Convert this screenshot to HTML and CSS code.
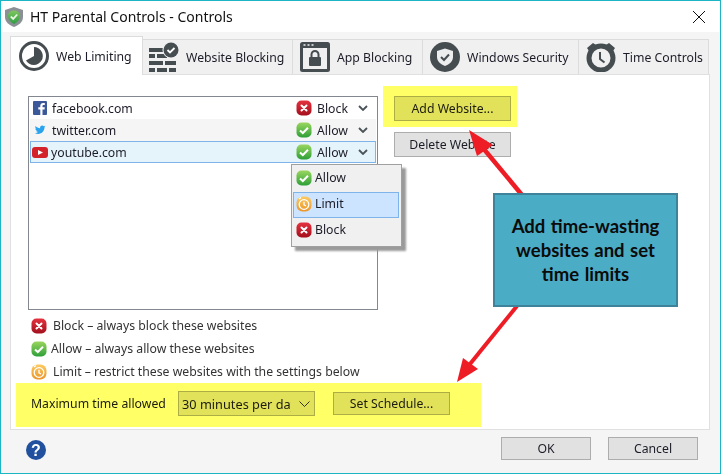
FILE: index.html
```html
<!DOCTYPE html>
<html lang="en">
<head>
<meta charset="utf-8">
<title>HT Parental Controls - Controls</title>
<link rel="stylesheet" href="styles.css">
</head>
<body>
<svg class="defs" width="0" height="0" aria-hidden="true">
  <defs>
    <linearGradient id="gr" x1="0" y1="0" x2="0" y2="1"><stop offset="0" stop-color="#e5323f"/><stop offset="1" stop-color="#a30f1c"/></linearGradient>
    <linearGradient id="gg" x1="0" y1="0" x2="0" y2="1"><stop offset="0" stop-color="#9ad65f"/><stop offset="1" stop-color="#2d9f38"/></linearGradient>
    <linearGradient id="go" x1="0" y1="0" x2="0" y2="1"><stop offset="0" stop-color="#fcca62"/><stop offset="1" stop-color="#ea962a"/></linearGradient>
    <linearGradient id="gs" x1="0" y1="0" x2="0" y2="1"><stop offset="0" stop-color="#7fc75e"/><stop offset="1" stop-color="#2f9c45"/></linearGradient>
    <symbol id="i-block" viewBox="0 0 16 16"><rect x="0.5" y="0.5" width="15" height="15" rx="5" fill="url(#gr)"/><path d="M5.500 5.500l5 5M10.500 5.500l-5 5" stroke="#fff" stroke-width="2" stroke-linecap="round"/></symbol>
    <symbol id="i-allow" viewBox="0 0 16 16"><rect x="0.5" y="0.5" width="15" height="15" rx="5" fill="url(#gg)"/><path d="M4 8.500l2.800 2.500L12 5.800" fill="none" stroke="#fff" stroke-width="2"/></symbol>
    <symbol id="i-limit" viewBox="0 0 16 16"><rect x="0.5" y="0.5" width="15" height="15" rx="6" fill="url(#go)"/><circle cx="8" cy="8.500" r="4.800" fill="none" stroke="#fff" stroke-width="1.300"/><path d="M8 5.800v3l2 1.200M3 3l2-1.500" fill="none" stroke="#fff" stroke-width="1.300"/></symbol>
  </defs>
</svg>
<div class="window">
  <header class="titlebar">
    <svg class="app-icon" viewBox="0 0 18 20" width="18" height="20"><path d="M9 0l9 3v7c0 5-4 8-9 10-5-2-9-5-9-10V3z" fill="#8b9095"/><path d="M9 3.500a6.500 6.500 0 0 1 6 4c.6 4-2 7.500-6 9.500-4-2-6.600-5.500-6-9.500a6.500 6.500 0 0 1 6-4z" fill="url(#gs)"/><path d="M5.800 9.500l2.400 2.400 4-4.400" fill="none" stroke="#e8f6e0" stroke-width="1.800"/></svg>
    <span class="title">HT Parental Controls - Controls</span>
    <svg class="close" viewBox="0 0 12 12" width="12" height="12"><path d="M0 0l12 12M12 0L0 12" stroke="#111" stroke-width="1"/></svg>
  </header>
  <div class="content">
    <nav class="tabs">
      <div class="tab tab-active tab-web">
        <svg class="tab-icon" viewBox="0 0 30 30" width="30" height="30"><circle cx="15" cy="15" r="13.500" fill="none" stroke="#454d50" stroke-width="3"/><path d="M15 6a9 9 0 1 1-8 13.500l8-4.500z" fill="#454d50"/></svg>
        <span>Web Limiting</span>
      </div>
      <div class="tab tab-wall">
        <svg class="tab-icon" viewBox="0 0 30 30" width="30" height="30"><g fill="#454d50"><rect x="0" y="6" width="15" height="4"/><rect x="0" y="12" width="6" height="4"/><rect x="8" y="12" width="10" height="4"/><rect x="0" y="19" width="14" height="4"/><rect x="16" y="19" width="11" height="4"/><rect x="0" y="26" width="6" height="4"/><rect x="8" y="26" width="10" height="4"/><rect x="20" y="26" width="7" height="4"/></g><circle cx="22" cy="8" r="8.500" fill="#f0f0f0"/><circle cx="22" cy="8" r="7.500" fill="#454d50"/><path d="M18.500 8l2.500 2.500 4.500-4.500" fill="none" stroke="#fff" stroke-width="1.800"/></svg>
        <span>Website Blocking</span>
      </div>
      <div class="tab tab-app">
        <svg class="tab-icon" viewBox="0 0 30 30" width="30" height="30"><rect x="0" y="0" width="30" height="30" rx="2.500" fill="#454d50"/><rect x="3" y="6" width="24" height="21" fill="#f0f0f0"/><path d="M3.500 3h2M7.500 3h2M11.500 3h2" stroke="#f0f0f0" stroke-width="1.500"/><rect x="9" y="15" width="12" height="9" rx="1" fill="#454d50"/><path d="M11.500 15v-2.500a3.500 3.500 0 0 1 7 0V15" fill="none" stroke="#454d50" stroke-width="2"/></svg>
        <span>App Blocking</span>
      </div>
      <div class="tab tab-sec">
        <svg class="tab-icon" viewBox="0 0 30 30" width="30" height="30"><circle cx="15" cy="15" r="15" fill="#454d50"/><path d="M15 6.500l8 2.500v6c0 4.500-3.500 7-8 9-4.500-2-8-4.500-8-9V9z" fill="#eceeee"/><path d="M11 15l3 3 5-5.500" fill="none" stroke="#454d50" stroke-width="2"/></svg>
        <span>Windows Security</span>
      </div>
      <div class="tab tab-time">
        <svg class="tab-icon" viewBox="0 0 30 30" width="30" height="30"><circle cx="15" cy="16" r="12" fill="none" stroke="#454d50" stroke-width="5"/><path d="M14 10v7l4.500 3.500" fill="none" stroke="#454d50" stroke-width="2"/><path d="M1 6l6-5 3 2-7 6zM29 6l-6-5-3 2 7 6z" fill="#454d50"/></svg>
        <span>Time Controls</span>
      </div>
    </nav>
    <main class="panel">
      <div class="top-row">
        <div class="list">
          <div class="row">
            <svg class="logo" viewBox="0 0 14 14" width="14" height="14"><rect width="14" height="14" rx="1" fill="#3b5998"/><path d="M9.500 14V8.500h2l.3-2.200H9.500V5c0-.7.200-1.100 1.100-1.100h1.200V2c-.3 0-1-.1-1.700-.1-1.700 0-2.800 1-2.800 2.900v1.500H5.300v2.200h2V14z" fill="#fff"/></svg>
            <span class="site">facebook.com</span>
            <svg class="status-icon"><use href="#i-block"/></svg>
            <span class="status">Block</span>
            <svg class="chev" viewBox="0 0 10 6" width="10" height="6"><path d="M1 1l4 4 4-4" fill="none" stroke="#4a5358" stroke-width="1.800"/></svg>
          </div>
          <div class="row row-alt">
            <svg class="logo" viewBox="0 0 14 14" width="14" height="14"><path d="M12.500 3.600c-.4.200-.8.300-1.300.4.500-.3.800-.7 1-1.200-.4.300-.9.400-1.400.5-.4-.4-1-.7-1.600-.7-1.400 0-2.400 1.300-2.100 2.600-1.800-.1-3.400-1-4.500-2.300-.6 1-.3 2.300.7 2.900-.4 0-.7-.1-1-.3 0 1 .7 1.900 1.700 2.100-.3.100-.6.100-1 0 .3.800 1.100 1.400 2 1.500-.9.700-2 1-3.100.8 1 .6 2.100 1 3.300 1 4 0 6.300-3.400 6.200-6.400.4-.3.800-.6 1.100-.9z" fill="#2aa3ef"/></svg>
            <span class="site">twitter.com</span>
            <svg class="status-icon"><use href="#i-allow"/></svg>
            <span class="status">Allow</span>
            <svg class="chev" viewBox="0 0 10 6" width="10" height="6"><path d="M1 1l4 4 4-4" fill="none" stroke="#4a5358" stroke-width="1.800"/></svg>
          </div>
          <div class="row row-selected">
            <svg class="logo logo-yt" viewBox="0 0 16 11" width="16" height="11"><rect width="16" height="11" rx="3" fill="#d3222a"/><path d="M6 3l5 2.500L6 8z" fill="#fff"/></svg>
            <span class="site">youtube.com</span>
            <svg class="status-icon"><use href="#i-allow"/></svg>
            <span class="status">Allow</span>
            <svg class="chev" viewBox="0 0 10 6" width="10" height="6"><path d="M1 1l4 4 4-4" fill="none" stroke="#4a5358" stroke-width="1.800"/></svg>
          </div>
        </div>
        <div class="actions">
          <div class="btn">Add Website...</div>
          <div class="btn">Delete Website</div>
        </div>
      </div>
      <div class="legend">
        <div class="legend-row"><svg class="status-icon"><use href="#i-block"/></svg><span>Block – always block these websites</span></div>
        <div class="legend-row legend-tight"><svg class="status-icon"><use href="#i-allow"/></svg><span>Allow – always allow these websites</span></div>
        <div class="legend-row"><svg class="status-icon"><use href="#i-limit"/></svg><span>Limit – restrict these websites with the settings below</span></div>
      </div>
      <div class="time-row">
        <span class="time-label">Maximum time allowed</span>
        <div class="select"><span class="select-text">30 minutes per day</span><svg class="select-chev" viewBox="0 0 11 6" width="11" height="6"><path d="M.500.500l5 5 5-5" fill="none" stroke="#333" stroke-width="1"/></svg></div>
        <div class="btn btn-schedule">Set Schedule...</div>
      </div>
    </main>
    <footer class="footer">
      <svg class="help" viewBox="0 0 20 20" width="20" height="20"><circle cx="10" cy="10" r="10" fill="#20509e"/><text x="10" y="15.500" class="help-mark">?</text></svg>
      <div class="btn btn-footer btn-ok">OK</div>
      <div class="btn btn-footer">Cancel</div>
    </footer>
  </div>

  <div class="menu">
    <div class="menu-item"><svg class="status-icon"><use href="#i-allow"/></svg><span>Allow</span></div>
    <div class="menu-item menu-item-on"><svg class="status-icon"><use href="#i-limit"/></svg><span>Limit</span></div>
    <div class="menu-item"><svg class="status-icon"><use href="#i-block"/></svg><span>Block</span></div>
  </div>

  <div class="marker marker-add"></div>
  <div class="marker marker-time"></div>

  <svg class="arrows" viewBox="0 0 721 474" width="721" height="474">
    <path d="M522 195L483 148" stroke="#ee1c25" stroke-width="4.500" fill="none"/>
    <path d="M469 130L477 156L493 145z" fill="#ee1c25"/>
    <path d="M517 306L470 364" stroke="#ee1c25" stroke-width="4" fill="none"/>
    <path d="M457 382L463 358L478 369z" fill="#ee1c25"/>
  </svg>
  <div class="callout">Add time-wasting websites and set time limits</div>
</div>
</body>
</html>
```
FILE: styles.css
```css
* { box-sizing: border-box; }
html, body { margin: 0; padding: 0; }
body { font-family: "Noto Sans", sans-serif; font-size: 12.25px; color: #1c1c28; background: #fff; }
.defs { position: absolute; }
.window { position: relative; width: 721px; height: 474px; border: 1px solid #1cb5c4; display: flex; flex-direction: column; background: #fff; overflow: hidden; }

.titlebar { height: 31px; flex: none; display: flex; align-items: center; padding: 0 15px 0 4px; background: #fff; }
.app-icon { margin-right: 7px; }
.title { font-size: 14px; color: #111; flex: 1; }

.content { flex: 1; display: flex; flex-direction: column; background: #f5f5f5; padding-top: 4px; }
.tabs { display: flex; align-items: flex-end; height: 39px; margin-left: 9px; flex: none; }
.tab { height: 36px; display: flex; align-items: center; gap: 7px; padding-left: 6px; background: #f0f0f0; border: 1px solid #dcdcdc; border-left: 0; flex: none; }
.tab-active { height: 39px; background: #fff; padding-left: 8px; border-left: 1px solid #dcdcdc; border-bottom: 0; position: relative; z-index: 1; }
.tab-web { width: 133px; }
.tab-wall { width: 150px; }
.tab-app { width: 130px; padding-left: 7px; }
.tab-sec { width: 156px; padding-left: 7px; }
.tab-time { width: 130px; padding-left: 7px; }
.tab-icon { flex: none; }

.panel { margin: -1px 10px 0 9px; height: 356px; flex: none; background: #fff; border: 1px solid #e0e0e0; padding: 21px 17px 0; }
.top-row { display: flex; gap: 16px; }
.list { width: 350px; height: 214px; border: 1px solid #828790; padding: 0 1px; }
.row { height: 22px; display: flex; align-items: center; padding: 0 7px 0 2px; border: 1px solid transparent; }
.row-alt { background: #f5f5f5; }
.row-selected { background: #e5f3fb; border-color: #7eb4ea; }
.logo { flex: none; margin-right: 5px; }
.logo-yt { margin-left: -1px; margin-right: 3px; }
.site { flex: 1; }
.status-icon { width: 16px; height: 16px; flex: none; }
.status { width: 46px; padding-left: 5px; }
.chev { flex: none; }

.actions { display: flex; flex-direction: column; gap: 11px; width: 117px; }
.btn { height: 25px; display: flex; align-items: center; justify-content: center; background: #e1e1e1; border: 1px solid #adadad; }

.legend { padding: 4px 0 0 3px; }
.legend-row { height: 23px; display: flex; align-items: center; gap: 6px; color: #333; }
.legend-tight { gap: 4px; }

.time-row { display: flex; align-items: center; margin-top: 8px; padding-left: 3px; }
.time-label { width: 147px; flex: none; }
.select { width: 137px; height: 25px; display: flex; align-items: center; padding: 0 4px 0 3px; background: #e1e1e1; border: 1px solid #adadad; }
.select-text { width: 109px; white-space: nowrap; overflow: hidden; flex: none; font-size: 12.75px; }
.select-chev { margin-left: 8px; }
.btn-schedule { width: 117px; height: 23px; margin-left: 18px; }

.footer { flex: 1; display: flex; align-items: flex-start; padding: 7px 22px 0 25px; }
.help { margin-top: 3px; }
.help-mark { font-family: "Liberation Sans", sans-serif; font-weight: 700; font-size: 16px; fill: #fff; text-anchor: middle; }
.btn-footer { width: 90px; height: 23px; margin-left: 17px; }
.btn-ok { margin-left: auto; }

.menu { position: absolute; left: 290px; top: 163px; width: 111px; height: 83px; background: #f0f0f0; border: 1px solid #a0a0a0; box-shadow: 4px 4px 2px #9a9a9a; padding: 1px 2px 0 1px; }
.menu-item { height: 26px; display: flex; align-items: center; gap: 3px; padding: 0 0 3px 2px; border: 1px solid transparent; }
.menu-item-on { background: #cce4ff; border-color: #7eb4ea; }

.marker { position: absolute; background: #ffff66; mix-blend-mode: multiply; }
.marker-add { left: 382px; top: 85px; width: 134px; height: 41px; }
.marker-time { left: 15px; top: 382px; width: 465px; height: 44px; }

.arrows { position: absolute; left: -1px; top: -1px; }
.callout { position: absolute; left: 492px; top: 192px; width: 185px; height: 114px; padding: 0 6px; display: flex; align-items: center; justify-content: center; text-align: center; background: #4bacc6; border: 2px solid #3e8399; font-family: Lato, sans-serif; font-weight: 700; font-size: 18.5px; line-height: 24px; word-spacing: 1px; color: #0b0b0b; }
```
